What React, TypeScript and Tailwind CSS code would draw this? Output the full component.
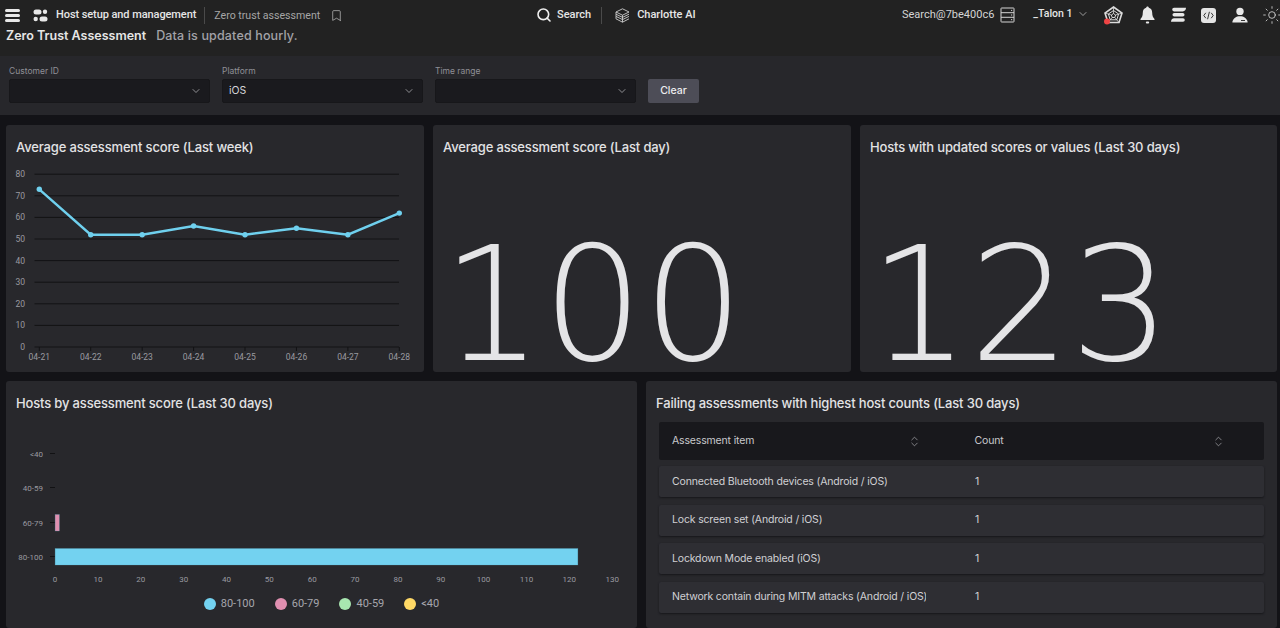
import React from 'react';
import { Bookmark, ChevronDown, ChevronsUpDown, Search, Sun } from 'lucide-react';

const weekScores = [
  { day: '04-21', score: 73 },
  { day: '04-22', score: 52 },
  { day: '04-23', score: 52 },
  { day: '04-24', score: 56 },
  { day: '04-25', score: 52 },
  { day: '04-26', score: 55 },
  { day: '04-27', score: 52 },
  { day: '04-28', score: 62 },
];

const hostBars = [
  { label: '<40', y: 28.5, value: 0, color: '#ffd966' },
  { label: '40-59', y: 62.5, value: 0, color: '#a8e6b0' },
  { label: '60-79', y: 97.5, value: 1, color: '#e08fb0' },
  { label: '80-100', y: 131.5, value: 122, color: '#73d2f0' },
];

const legend = [
  { label: '80-100', color: 'bg-[#73d2f0]' },
  { label: '60-79', color: 'bg-[#e08fb0]' },
  { label: '40-59', color: 'bg-[#a8e6b0]' },
  { label: '<40', color: 'bg-[#ffd966]' },
];

const failing = [
  'Connected Bluetooth devices (Android / iOS)',
  'Lock screen set (Android / iOS)',
  'Lockdown Mode enabled (iOS)',
  'Network contain during MITM attacks (Android / iOS)',
];

const AppIcon = () => (
  <svg width="15" height="15" viewBox="0 0 15 15" fill="#e8e8e8">
    <rect x="0.5" y="1.5" width="8" height="5" rx="2.5" />
    <circle cx="12" cy="3.7" r="2.2" />
    <circle cx="2.7" cy="11" r="2.2" />
    <rect x="6.500" y="8.500" width="8" height="5" rx="2.5" />
  </svg>
);

const CharlotteIcon = () => (
  <svg width="15" height="15" viewBox="0 0 15 15" fill="none" stroke="#cfcfcf" strokeWidth="0.9">
    <path d="M7.5 0.8 14 4 7.5 7.2 1 4Z" />
    <path d="M1 4v2.2l6.5 3.2L14 6.2" />
    <path d="M1 6.2v2.2l6.5 3.2L14 8.4" />
    <path d="M1 8.4v2.4l6.5 3.4 6.5-3.4" />
    <path d="M7.5 7.2v7" />
  </svg>
);

const ServerIcon = () => (
  <svg width="15" height="16" viewBox="0 0 15 16" fill="none" stroke="#d4d4d4" strokeWidth="1">
    <rect x="1" y="1" width="13" height="14" rx="0.5" />
    <path d="M1 5.7h13M1 10.3h13" />
    <path d="M11 3.4h1.2M11 8h1.2M11 12.7h1.2" />
  </svg>
);

const WebIcon = () => (
  <svg width="19" height="19" viewBox="0 0 19 19" fill="none" stroke="#dcdcdc">
    <path d="M9.5 1 18 7 15 16.5H4L1 7Z" strokeWidth="1.6" />
    <path d="M9.5 4.5 14.6 8 12.8 13.8H6.2L4.4 8Z" strokeWidth="1" />
    <path d="M9.5 7.5 11.6 9 10.8 11.5H8.2L7.4 9Z" strokeWidth="1" />
    <path d="M9.5 1v6.5M18 7l-6.4 2M15 16.5l-4.2-5M4 16.5l4.2-5M1 7l6.4 2" strokeWidth="0.8" />
    <circle cx="3" cy="15.5" r="3" fill="#ef4444" stroke="none" />
  </svg>
);

const BellIcon = () => (
  <svg width="15" height="18" viewBox="0 0 15 18" fill="#e8e8e8">
    <path d="M7.5 0.5c.8 0 1.3.6 1.3 1.3 2.4.6 3.4 2.6 3.4 5 0 3.2.8 4.6 2.3 6.2v1H.5v-1C2 11.4 2.8 10 2.8 6.8c0-2.4 1-4.4 3.4-5 0-.7.5-1.3 1.3-1.3Z" />
    <rect x="5.8" y="15.4" width="3.4" height="2.2" rx="1.1" />
  </svg>
);

const StackIcon = () => (
  <svg width="15" height="16" viewBox="0 0 15 16" fill="#e8e8e8">
    <path d="M3 0.8h12c0 2-1.2 3.6-3.2 3.6H3a1.8 1.8 0 0 1 0-3.6Z" />
    <rect x="1.5" y="6" width="12" height="3.6" rx="1.8" />
    <path d="M3.2 11.2H12a1.8 1.8 0 0 1 0 3.6H0c0-2 1.2-3.6 3.2-3.6Z" />
  </svg>
);

const CodeIcon = () => (
  <div className="flex h-[15px] w-[15px] items-center justify-center rounded-[3px] bg-[#e4e4e4]">
    <svg width="11" height="9" viewBox="0 0 11 9" fill="none" stroke="#222222" strokeWidth="0.9">
      <path d="M2.8 1.8.8 4.5l2 2.7M8.2 1.8l2 2.7-2 2.7M6.4.8 4.6 8.2" />
    </svg>
  </div>
);

const UserIcon = () => (
  <svg width="16" height="16" viewBox="0 0 16 16" fill="#e8e8e8">
    <circle cx="8" cy="4.4" r="3.7" />
    <path d="M8 9.2c3.8 0 6.8 2 7.6 5.6v.6H.4v-.6C1.200 11.200 4.200 9.200 8 9.200Z" />
    <rect x="9" y="13" width="4" height="0.9" fill="#222222" />
  </svg>
);

const Filter = ({ label, value }: { label: string; value?: string }) => (
  <div className="flex w-[201px] flex-col gap-[2px]">
    <label className="text-[8.5px] leading-[12px] text-[#8f8f96]">{label}</label>
    <div className="flex h-[24px] items-center justify-between rounded-[2px] border border-[#17171a] bg-[#1a1a1e] pl-[6px] pr-[7px] text-[10.5px] text-[#d4d4d8]">
      <span>{value}</span>
      <ChevronDown size={12} strokeWidth={1.5} className="text-[#b4b4b8]" />
    </div>
  </div>
);

const Card = ({ title, className, children }: { title: string; className: string; children?: React.ReactNode }) => (
  <section className={`flex h-[247px] flex-col overflow-hidden rounded-[3px] bg-[#28282c] ${className}`}>
    <h2 className="h-[44px] shrink-0 pl-[10px] pt-[14px] text-[13px] font-medium leading-[17px] tracking-[-0.16px] text-[#e2e2e4]">{title}</h2>
    {children}
  </section>
);

const BigNumber = ({ value }: { value: string }) => (
  <div className="flex flex-1 items-end pl-[9px] font-['DejaVu_Sans',sans-serif] text-[158px] font-extralight leading-[133px] text-[#e4e4e6]">
    {value}
  </div>
);

const LineChart = () => {
  const toX = (i: number) => 33.3 + i * 51.43;
  const toY = (v: number) => 178 - v * 2.16;
  const line = weekScores.map((p, i) => `${toX(i)},${toY(p.score)}`).join(' ');
  return (
    <svg width="418" height="203" viewBox="0 0 418 203" className="block" fontFamily="Roboto, sans-serif">
      {[0, 10, 20, 30, 40, 50, 60, 70, 80].map((v) => (
        <g key={v}>
          <line x1="28.500" x2="393" y1={toY(v)} y2={toY(v)} stroke="#121214" strokeWidth="1" />
          <text x="19" y={toY(v) + 3} fontSize="8.500" fill="#9a9aa0" textAnchor="end">{v}</text>
        </g>
      ))}
      {weekScores.map((p, i) => (
        <g key={p.day}>
          <line x1={toX(i)} x2={toX(i)} y1="178" y2="182" stroke="#121214" />
          <text x={toX(i)} y="191" fontSize="8.500" fill="#9a9aa0" textAnchor="middle">{p.day}</text>
        </g>
      ))}
      <polyline points={line} fill="none" stroke="#6fd0ee" strokeWidth="2.400" />
      {weekScores.map((p, i) => (
        <circle key={p.day} cx={toX(i)} cy={toY(p.score)} r="2.700" fill="#6fd0ee" />
      ))}
    </svg>
  );
};

const BarChart = () => {
  const unit = 4.285;
  const toX = (v: number) => 49.1 + v * unit;
  const ticks = Array.from({ length: 14 }, (_, i) => i * 10);
  return (
    <svg width="631" height="160" viewBox="0 0 631 160" className="block" fontFamily="Roboto, sans-serif">
      {hostBars.map((b) => (
        <g key={b.label}>
          <line x1="44" x2="49" y1={b.y} y2={b.y} stroke="#121214" />
          <text x="37" y={b.y + 3} fontSize="8" fill="#9a9aa0" textAnchor="end">{b.label}</text>
          {b.value > 0 && (
            <rect x={toX(0)} y={b.y - 8} width={b.value * unit} height="16.500" fill={b.color} stroke="#5aa9c4" strokeOpacity="0.5" strokeWidth="0.500" />
          )}
        </g>
      ))}
      {ticks.map((t) => (
        <text key={t} x={toX(t)} y="157" fontSize="8" fill="#9a9aa0" textAnchor="middle">{t}</text>
      ))}
    </svg>
  );
};

export default function App() {
  return (
    <div className="flex h-[628px] w-[1280px] flex-col overflow-hidden bg-[#131317] font-['Inter',sans-serif]">
      <header className="flex h-[30px] shrink-0 items-center whitespace-nowrap bg-[#222222] font-['Roboto',sans-serif] text-[11px] text-[#e6e6e6]">
        <div className="flex w-[538px] shrink-0 items-center">
          <div className="ml-[5px] flex h-[13px] w-[15px] flex-col justify-between">
            <span className="h-[3px] rounded-full bg-[#e8e8e8]" />
            <span className="h-[3px] rounded-full bg-[#e8e8e8]" />
            <span className="h-[3px] rounded-full bg-[#e8e8e8]" />
          </div>
          <span className="ml-[13px]"><AppIcon /></span>
          <span className="ml-[8px] mt-px font-medium tracking-[-0.08px]">Host setup and management</span>
          <span className="ml-[8px] h-[17px] w-px bg-[#4a4a4a]" />
          <span className="ml-[9px] mt-px text-[10.6px] text-[#a6a6a6]">Zero trust assessment</span>
          <Bookmark size={13} strokeWidth={1.4} className="ml-[10px] text-[#b8b8b8]" />
        </div>
        <div className="flex w-[364px] shrink-0 items-center">
          <Search size={16} strokeWidth={2.4} className="-ml-[2px] text-[#efefef]" />
          <span className="ml-[5px] mt-px font-medium">Search</span>
          <span className="ml-[10px] h-[17px] w-px bg-[#4a4a4a]" />
          <span className="ml-[13px]"><CharlotteIcon /></span>
          <span className="ml-[7px] mt-px font-medium">Charlotte AI</span>
        </div>
        <div className="flex flex-1 items-center">
          <span className="mt-px text-[#d4d4d4]">Search@7be400c6</span>
          <span className="ml-[6px]"><ServerIcon /></span>
          <span className="ml-[18px] -mt-[2px] text-[10.5px] font-medium">_Talon 1</span>
          <ChevronDown size={12} strokeWidth={1.4} className="ml-[4px] -mt-[3px] text-[#cfcfcf]" />
          <span className="ml-[15px]"><WebIcon /></span>
          <span className="ml-[17px]"><BellIcon /></span>
          <span className="ml-[16px]"><StackIcon /></span>
          <span className="ml-[15px]"><CodeIcon /></span>
          <span className="ml-[16px]"><UserIcon /></span>
          <Sun size={20} strokeWidth={1} className="ml-[14px] shrink-0 text-[#d8d8d8]" />
        </div>
      </header>

      <div className="flex h-[26px] shrink-0 gap-[10px] overflow-hidden bg-[#222222] pl-[6px] text-[12.5px] font-semibold leading-[15px]">
        <span className="-mt-[2px] text-[#e6e6e6]">Zero Trust Assessment</span>
        <span className="-mt-[2px] font-medium tracking-[0.15px] text-[#a3a3a8]">Data is updated hourly.</span>
      </div>

      <div className="flex h-[59px] shrink-0 items-start gap-[12px] bg-[#27272b] pl-[9px] pt-[9px]">
        <Filter label="Customer ID" />
        <Filter label="Platform" value="iOS" />
        <Filter label="Time range" />
        <button className="mt-[14px] h-[24px] w-[51px] rounded-[2px] bg-[#4d4d57] text-[10.5px] font-medium text-[#ececee]">Clear</button>
      </div>

      <main className="flex flex-1 flex-col gap-[9px] pl-[6px] pr-[3px] pt-[10px]">
        <div className="flex gap-[9px]">
          <Card title="Average assessment score (Last week)" className="w-[418px]">
            <LineChart />
          </Card>
          <Card title="Average assessment score (Last day)" className="w-[418px]">
            <BigNumber value="100" />
          </Card>
          <Card title="Hosts with updated scores or values (Last 30 days)" className="w-[417px]">
            <BigNumber value="123" />
          </Card>
        </div>
        <div className="flex gap-[9px]">
          <Card title="Hosts by assessment score (Last 30 days)" className="w-[631px]">
            <BarChart />
            <div className="flex items-center justify-center gap-[20px] pt-[12px] font-['Roboto',sans-serif] text-[11px] leading-[13px] text-[#a6a6ac]">
              {legend.map((l) => (
                <div key={l.label} className="flex items-center gap-[5px]">
                  <span className={`h-[12px] w-[12px] rounded-full ${l.color}`} />
                  <span>{l.label}</span>
                </div>
              ))}
            </div>
          </Card>
          <Card title="Failing assessments with highest host counts (Last 30 days)" className="w-[631px]">
            <div className="-mt-[3px] flex flex-col px-[13px] tracking-[-0.16px]">
              <div className="flex h-[38px] items-center rounded-[2px] bg-[#18181c] text-[10.5px] text-[#c8c8cc]">
                <div className="flex w-[303px] items-center justify-between pl-[13px] pr-[41px]">
                  <span>Assessment item</span>
                  <ChevronsUpDown size={13} strokeWidth={1.2} className="text-[#b8b8bc]" />
                </div>
                <div className="flex w-[303px] items-center justify-between pr-[39px]">
                  <span className="pl-[13px]">Count</span>
                  <ChevronsUpDown size={13} strokeWidth={1.2} className="text-[#b8b8bc]" />
                </div>
              </div>
              <div className="mt-[6px] flex flex-col gap-[7.500px]">
                {failing.map((item) => (
                  <div key={item} className="flex h-[31px] items-center rounded-[2px] bg-[#2e2e33] text-[10.5px] text-[#d0d0d4] shadow-[0_1px_2px_#17171a]">
                    <span className="ml-[13px] w-[254px] overflow-hidden whitespace-nowrap">{item}</span>
                    <span className="ml-[49px]">1</span>
                  </div>
                ))}
              </div>
            </div>
          </Card>
        </div>
      </main>
    </div>
  );
}
